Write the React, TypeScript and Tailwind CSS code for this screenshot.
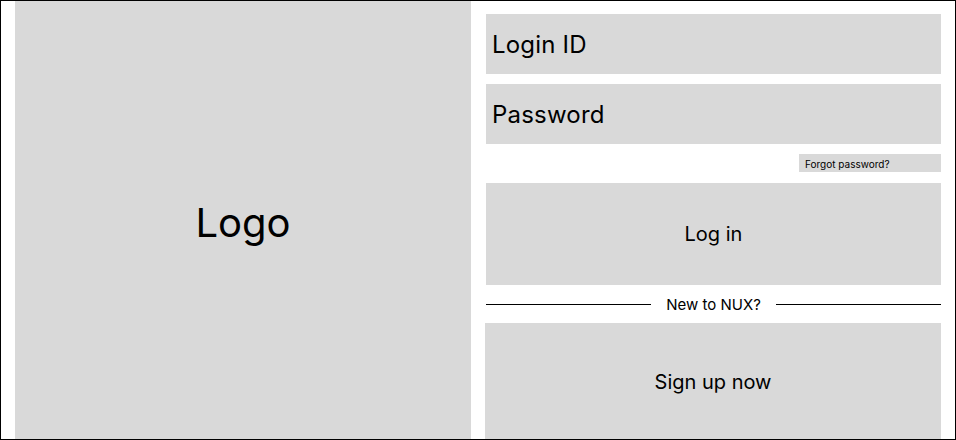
import React from "react";

export default function App() {
  return (
    <div
      className="w-[956px] h-[440px] border border-black bg-white flex pl-[14px] pr-[14px] gap-[15px] overflow-hidden text-black"
      style={{ fontFamily: "Inter, 'Noto Sans', sans-serif" }}
    >
      <div className="w-[456px] h-full bg-[#d9d9d9] flex items-center justify-center">
        <span className="text-[40px] leading-none mt-[5px]">Logo</span>
      </div>
      <div className="w-[455px] flex flex-col pt-[13px]">
        <div className="h-[60px] bg-[#d9d9d9] flex items-center px-[6px]">
          <span className="text-[24px] leading-none mt-[2px] tracking-[0.2px]">Login ID</span>
        </div>
        <div className="h-[60px] mt-[10px] bg-[#d9d9d9] flex items-center px-[6px]">
          <span className="text-[24px] leading-none mt-[2px] tracking-[0.2px]">Password</span>
        </div>
        <div className="mt-[10px] flex justify-end">
          <div className="w-[142px] h-[18px] bg-[#d9d9d9] flex items-center px-[6px]">
            <span className="text-[10px] leading-none mt-[1px]">Forgot password?</span>
          </div>
        </div>
        <div className="h-[102px] mt-[11px] bg-[#d9d9d9] flex items-center justify-center">
          <span className="text-[20px] leading-none">Log in</span>
        </div>
        <div className="h-[38px] flex items-center">
          <div className="flex-1 h-px bg-black" />
          <span className="text-[15px] leading-none px-[15px]">New to NUX?</span>
          <div className="flex-1 h-px bg-black" />
        </div>
        <div className="flex-1 -ml-px bg-[#d9d9d9] flex items-center justify-center">
          <span className="text-[20px] leading-none mt-[1px]">Sign up now</span>
        </div>
      </div>
    </div>
  );
}
